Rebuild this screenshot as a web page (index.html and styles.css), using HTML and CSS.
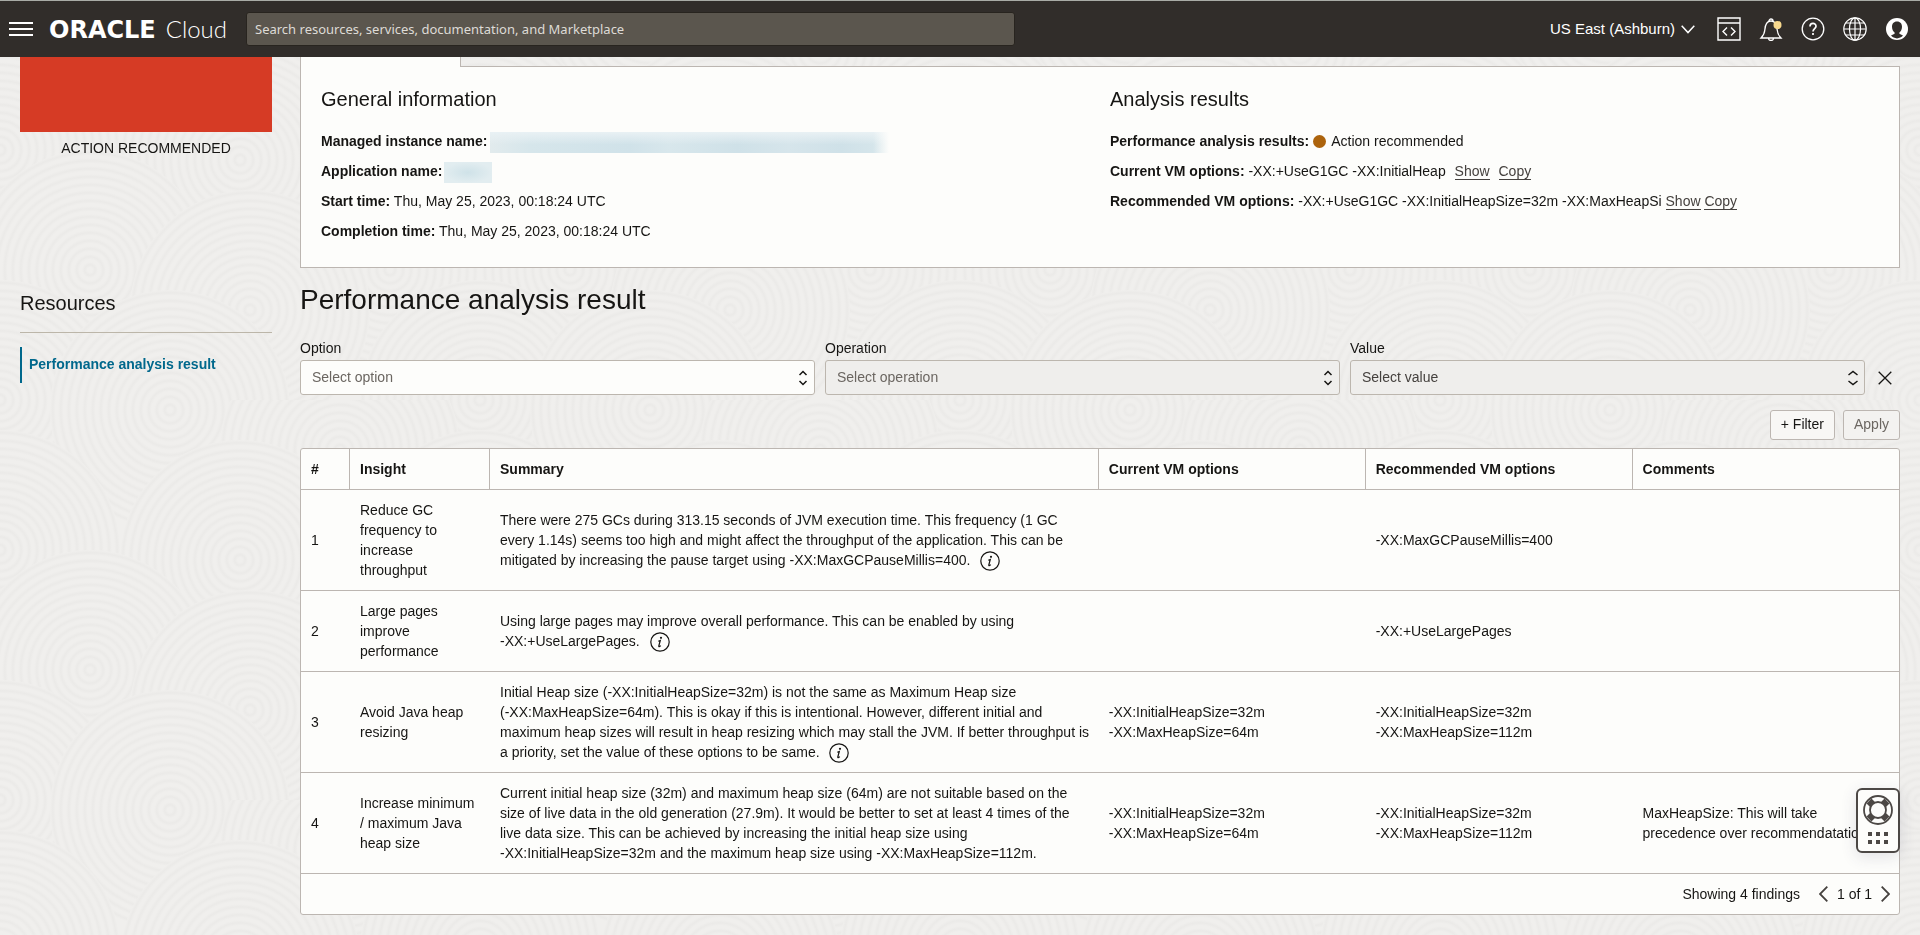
FILE: index.html
```html
<!DOCTYPE html>
<html lang="en">
<head>
<meta charset="utf-8">
<title>Performance analysis result - Oracle Cloud</title>
<link rel="stylesheet" href="styles.css">
</head>
<body>
<svg class="texture" aria-hidden="true">
  <defs>
    <radialGradient id="ring" gradientUnits="userSpaceOnUse" cx="0" cy="0" r="8" spreadMethod="repeat">
      <stop offset="0" stop-color="#f0efed"/><stop offset="0.3" stop-color="#f0efed"/>
      <stop offset="0.65" stop-color="#ebeae8"/><stop offset="1" stop-color="#f0efed"/>
    </radialGradient>
    <circle id="disc" r="120" fill="url(#ring)"/>
    <pattern id="waves" width="480" height="400" patternUnits="userSpaceOnUse">
      <rect width="480" height="400" fill="#f0efed"/>
      <use href="#disc" x="0" y="0"/><use href="#disc" x="480" y="0"/>
      <use href="#disc" x="170" y="10"/>
      <use href="#disc" x="340" y="50"/>
      <use href="#disc" x="0" y="150"/><use href="#disc" x="480" y="150"/>
      <use href="#disc" x="240" y="160"/>
      <use href="#disc" x="90" y="270"/>
      <use href="#disc" x="390" y="270"/>
      <use href="#disc" x="250" y="310"/>
      <use href="#disc" x="0" y="400"/><use href="#disc" x="480" y="400"/>
      <use href="#disc" x="170" y="410"/>
    </pattern>
  </defs>
  <rect width="100%" height="100%" fill="url(#waves)"/>
</svg>

<header class="topbar">
  <button class="icon-btn" aria-label="Navigation menu">
    <svg width="24" height="14" viewBox="0 0 24 14" stroke="#fff" stroke-width="2"><path d="M0 1h24M0 7h24M0 13h24"/></svg>
  </button>
  <a class="brand" href="#"><span class="brand-oracle">ORACLE</span><span class="brand-cloud">Cloud</span></a>
  <input class="search" type="search" aria-label="Search" placeholder="Search resources, services, documentation, and Marketplace">
  <div class="tools">
    <button class="region">US East (Ashburn)
      <svg width="14" height="9" viewBox="0 0 14 9" fill="none" stroke="#fff" stroke-width="1.5"><path d="M.7.8 7 7.6 13.3.8"/></svg>
    </button>
    <button class="icon-btn" aria-label="Developer tools">
      <svg width="24" height="24" viewBox="0 0 24 24" fill="none" stroke="#fff" stroke-width="1.4"><path d="M1 1h22v22H1zM1 6h22M10 10.500l-4 4 4 4M14 10.500l4 4-4 4"/></svg>
    </button>
    <button class="icon-btn" aria-label="Announcements">
      <svg width="24" height="24" viewBox="0 0 24 24" fill="none" stroke="#fff" stroke-width="1.3"><path d="M2 21h20c-2.500-2.500-3.500-4-3.800-8C17.800 7.500 15.500 4 12 4S6.200 7.500 5.800 13C5.500 17 4.500 18.500 2 21zM10 4a2 2 0 1 1 4 0M9.500 21a2.500 2.500 0 0 0 5 0"/><circle cx="18.500" cy="8" r="4" fill="#f7d88d" stroke="none"/></svg>
    </button>
    <button class="icon-btn" aria-label="Help">
      <svg width="24" height="24" viewBox="0 0 24 24" fill="none" stroke="#fff" stroke-width="1.3"><circle cx="12" cy="12" r="10.800"/><path d="M9 9.500c0-4 6-4 6-.3 0 2.300-3 2.600-3 5.300M12 16v2" stroke-width="1.700"/></svg>
    </button>
    <button class="icon-btn" aria-label="Language">
      <svg width="24" height="24" viewBox="0 0 24 24" fill="none" stroke="#fff" stroke-width="1.200"><circle cx="12" cy="12" r="11.200"/><ellipse cx="12" cy="12" rx="5.500" ry="11.200"/><path d="M12 1v22M1 12h22M3 6h18M3 18h18"/></svg>
    </button>
    <button class="icon-btn" aria-label="Profile">
      <svg width="24" height="24" viewBox="0 0 24 24"><circle cx="12" cy="12" r="11" fill="#fff"/><path d="M12 4.500c-3.400 0-5 2.300-5 5.200 0 2.600 1.100 4.700 2.600 5.700v1.400L6 18.600c1.600 1.800 3.700 2.800 6 2.800s4.400-1 6-2.800l-3.600-1.800v-1.400c1.500-1 2.600-3.100 2.600-5.700 0-2.900-1.600-5.200-5-5.200z" fill="#312d2a"/></svg>
    </button>
  </div>
</header>

<div class="page">
  <aside class="sidebar">
    <div class="status-tile"></div>
    <p class="status-label">ACTION RECOMMENDED</p>
    <h2 class="side-title">Resources</h2>
    <nav><a class="side-link" href="#result">Performance analysis result</a></nav>
  </aside>

  <main class="main">
    <div class="tabs"><div class="tab-active"></div><div class="tab-rest"></div></div>
    <section class="panel">
      <div>
        <h2 class="panel-title">General information</h2>
        <p class="fact"><b>Managed instance name:</b><span class="masked masked-long"></span></p>
        <p class="fact"><b>Application name:</b><span class="masked masked-short"></span></p>
        <p class="fact"><b>Start time:</b> Thu, May 25, 2023, 00:18:24 UTC</p>
        <p class="fact"><b>Completion time:</b> Thu, May 25, 2023, 00:18:24 UTC</p>
      </div>
      <div>
        <h2 class="panel-title">Analysis results</h2>
        <p class="fact"><b>Performance analysis results:</b> <span class="dot"></span> Action recommended</p>
        <p class="fact"><b>Current VM options:</b> -XX:+UseG1GC -XX:InitialHeap <a class="action spaced" href="#">Show</a> <a class="action spaced" href="#">Copy</a></p>
        <p class="fact"><b>Recommended VM options:</b> -XX:+UseG1GC -XX:InitialHeapSize=32m -XX:MaxHeapSi <a class="action" href="#">Show</a> <a class="action" href="#">Copy</a></p>
      </div>
    </section>

    <h1 class="title" id="result">Performance analysis result</h1>

    <form class="filters">
      <div class="field">
        <label for="option">Option</label>
        <div class="select-box">
          <select id="option"><option>Select option</option></select>
          <svg class="carets" width="10" height="16" viewBox="0 0 10 16"><path d="M1.500 5 5 1.500 8.500 5M1.500 11 5 14.500 8.500 11"/></svg>
        </div>
      </div>
      <div class="field">
        <label for="operation">Operation</label>
        <div class="select-box">
          <select id="operation" disabled><option>Select operation</option></select>
          <svg class="carets" width="10" height="16" viewBox="0 0 10 16"><path d="M1.500 5 5 1.500 8.500 5M1.500 11 5 14.500 8.500 11"/></svg>
        </div>
      </div>
      <div class="field">
        <label for="value">Value</label>
        <div class="select-box">
          <select id="value" class="value-select" disabled><option>Select value</option></select>
          <svg class="carets" width="10" height="16" viewBox="0 0 10 16"><path d="M.5 5 5 1.500 9.500 5M.5 11 5 14.500 9.500 11"/></svg>
        </div>
      </div>
      <button class="clear" type="button" aria-label="Remove filter">
        <svg width="14" height="14" viewBox="0 0 14 14" stroke="#161513" stroke-width="1.300"><path d="M.7.7l12.600 12.600M13.300.7.7 13.300"/></svg>
      </button>
    </form>
    <div class="filter-actions">
      <button class="btn" type="button">+ Filter</button>
      <button class="btn" type="button" disabled>Apply</button>
    </div>

    <div class="table-card">
      <table class="findings">
        <colgroup><col class="c-num"><col class="c-insight"><col class="c-summary"><col class="c-vm"><col class="c-vm"><col></colgroup>
        <thead>
          <tr><th>#</th><th>Insight</th><th>Summary</th><th>Current VM options</th><th>Recommended VM options</th><th>Comments</th></tr>
        </thead>
        <tbody>
          <tr>
            <td>1</td><td>Reduce GC frequency to increase throughput</td>
            <td class="summary">There were 275 GCs during 313.15 seconds of JVM execution time. This frequency (1 GC every 1.14s) seems too high and might affect the throughput of the application. This can be mitigated by increasing the pause target using -XX:MaxGCPauseMillis=400. <button class="info" aria-label="More information"><svg width="20" height="20" viewBox="0 0 20 20"><use href="#info-icon"/></svg></button></td>
            <td></td><td>-XX:MaxGCPauseMillis=400</td><td></td>
          </tr>
          <tr>
            <td>2</td><td>Large pages improve performance</td>
            <td class="summary">Using large pages may improve overall performance. This can be enabled by using <span class="opt">-XX:+UseLargePages.</span> <button class="info" aria-label="More information"><svg width="20" height="20" viewBox="0 0 20 20"><use href="#info-icon"/></svg></button></td>
            <td></td><td>-XX:+UseLargePages</td><td></td>
          </tr>
          <tr>
            <td>3</td><td>Avoid Java heap resizing</td>
            <td class="summary">Initial Heap size (-XX:InitialHeapSize=32m) is not the same as Maximum Heap size <span class="opt">(-XX:MaxHeapSize=64m).</span> This is okay if this is intentional. However, different initial and maximum heap sizes will result in heap resizing which may stall the JVM. If better throughput is a priority, set the value of these options to be same. <button class="info" aria-label="More information"><svg width="20" height="20" viewBox="0 0 20 20"><use href="#info-icon"/></svg></button></td>
            <td>-XX:InitialHeapSize=32m<br>-XX:MaxHeapSize=64m</td><td>-XX:InitialHeapSize=32m<br>-XX:MaxHeapSize=112m</td><td></td>
          </tr>
          <tr>
            <td>4</td><td>Increase minimum / maximum Java heap size</td>
            <td class="summary">Current initial heap size (32m) and maximum heap size (64m) are not suitable based on the size of live data in the old generation (27.9m). It would be better to set at least 4 times of the live data size. This can be achieved by increasing the initial heap size using <span class="opt">-XX:InitialHeapSize=32m</span> and the maximum heap size using -XX:MaxHeapSize=112m.</td>
            <td>-XX:InitialHeapSize=32m<br>-XX:MaxHeapSize=64m</td><td>-XX:InitialHeapSize=32m<br>-XX:MaxHeapSize=112m</td><td>MaxHeapSize: This will take precedence over recommendatation</td>
          </tr>
        </tbody>
      </table>
      <div class="pager">
        <span class="count">Showing 4 findings</span>
        <button class="page-btn" aria-label="Previous page"><svg width="9" height="16" viewBox="0 0 9 16"><path d="M8.300.7 1 8l7.300 7.300"/></svg></button>
        <span>1 of 1</span>
        <button class="page-btn" aria-label="Next page"><svg width="9" height="16" viewBox="0 0 9 16"><path d="M.7.7 8 8 .7 15.300"/></svg></button>
      </div>
    </div>
  </main>
</div>

<button class="help-widget" aria-label="Support">
  <svg width="30" height="30" viewBox="0 0 30 30" fill="none" stroke="#4c4845">
    <path d="M6 6l5 5M24 6l-5 5M6 24l5-5M24 24l-5-5" stroke-width="7"/>
    <circle cx="15" cy="15" r="14" stroke-width="1.800"/><circle cx="15" cy="15" r="8" stroke-width="1.800" fill="#fdfdfb"/>
  </svg>
  <svg width="20" height="12" viewBox="0 0 20 12" fill="#4c4845"><path d="M0 0h4v4H0zM8 0h4v4H8zM16 0h4v4h-4zM0 8h4v4H0zM8 8h4v4H8zM16 8h4v4h-4z"/></svg>
</button>

<svg class="defs" width="0" height="0" aria-hidden="true">
  <symbol id="info-icon" viewBox="0 0 20 20"><circle cx="10" cy="10" r="9.200" fill="none" stroke="#161513" stroke-width="1.200"/><circle cx="11" cy="5.800" r="1.100" fill="#161513"/><path d="M8.300 9.300l2-.8-1.500 5.500c-.2 1 .9.800 2-.4" fill="none" stroke="#161513" stroke-width="1.200"/></symbol>
</svg>
</body>
</html>
```
FILE: styles.css
```css
* { box-sizing: border-box; }

body {
  margin: 0;
  min-height: 100vh;
  display: flex;
  flex-direction: column;
  background: #f0efed;
  border-top: 1px solid #a9aca6;
  border-bottom: 1px solid #bcb6b1;
  color: #161513;
  font: 14px/20px "Liberation Sans", Arial, sans-serif;
}

h1, h2, p { margin: 0; font-weight: 400; }
button, select, input { font: inherit; color: inherit; }
button { background: none; border: 0; padding: 0; cursor: pointer; }
svg { display: block; }

.texture { position: fixed; inset: 0; width: 100%; height: 100%; z-index: -1; }
.defs { position: absolute; }

/* Top bar */
.topbar {
  display: flex;
  align-items: center;
  height: 56px;
  padding: 0 11px 0 9px;
  background: #312d2a;
  color: #fff;
}
.brand { display: flex; align-items: baseline; justify-content: space-between; width: 178px; margin: 0 19px 0 16px; color: #fff; text-decoration: none; line-height: 28px; }
.brand-oracle { font-family: "DejaVu Sans", sans-serif; font-size: 24px; font-weight: 700; }
.brand-cloud { font-family: Lato, sans-serif; font-size: 24px; font-weight: 300; }
.search {
  flex: 0 1 769px;
  height: 34px;
  padding: 0 8px;
  border: 1px solid #28241f;
  border-radius: 3px;
  background: #5b564e;
  font: 13px/20px "Noto Sans", sans-serif;
  color: #fff;
}
.search::placeholder { color: #dedbd6; opacity: 1; }
.tools { display: flex; align-items: center; gap: 18px; margin-left: auto; }
.region { display: flex; align-items: center; gap: 6px; margin-right: 4px; font-size: 15px; }
.icon-btn { flex: none; }

/* Page frame */
.page { display: flex; flex: 1; gap: 28px; padding: 0 20px 20px; }
.sidebar { flex: 0 0 252px; }
.main { flex: 1; min-width: 0; }

.status-tile { height: 75px; background: #d63b25; }
.status-label { padding: 6px 0; text-align: center; }
.side-title { padding: 125px 0 15px; margin-bottom: 14px; border-bottom: 1px solid #bcb6a9; font-size: 20px; line-height: 28px; }
.side-link { display: block; padding: 7px 7px 9px; border-left: 2px solid #00688c; color: #00688c; font-weight: 700; text-decoration: none; }

/* Details panel */
.tabs { display: flex; height: 10px; }
.tab-active { flex: 0 0 161px; background: #fdfdfb; border: solid #bcb6b1; border-width: 0 1px; }
.tab-rest { flex: 1; border-bottom: 1px solid #bcb6b1; }
.panel {
  display: grid;
  grid-template-columns: 1fr 1fr;
  gap: 20px;
  padding: 18px 20px 21px;
  background: #fdfdfb;
  border: 1px solid #bcb6b1;
  border-top: 0;
}
.panel-title { margin-bottom: 13px; font-size: 20px; line-height: 28px; }
.fact { line-height: 30px; white-space: nowrap; }
.masked { display: inline-block; height: 21px; margin-left: 2px; vertical-align: middle; }
.masked-long {
  width: 399px;
  background:
    linear-gradient(90deg, transparent 96%, #fdfdfb),
    linear-gradient(#e9f1f4, transparent 60%),
    linear-gradient(90deg, #e2ebed, #d6e6eb 10%, #d0e2e9 35%, #d8e7ec 45%, #cfe1e8 62%, #d6e5eb 75%, #cfe1e8 88%, #d8e7ec);
}
.masked-short { width: 48px; background: radial-gradient(closest-side, #cfe2e8, #e2edf0); }
.dot { display: inline-block; width: 13px; height: 13px; margin-right: 2px; border-radius: 50%; background: #ac630c; vertical-align: -2px; }
.action { color: #45413e; text-decoration: none; border-bottom: 1px solid #45413e; }
.spaced { margin-left: 5px; }

/* Filters */
.title { padding: 15px 0 16px; font-size: 28px; line-height: 34px; }
.filters { display: flex; align-items: flex-end; gap: 10px; padding-top: 5px; }
.field { flex: 1; }
.field label { display: block; margin-bottom: 2px; }
.select-box { position: relative; }
.select-box select {
  display: block;
  width: 100%;
  height: 35px;
  padding: 0 11px 2px;
  appearance: none;
  border: 1px solid #bcb6ae;
  border-radius: 3px;
  background: #fdfdfb;
  color: #6b6661;
  opacity: 1;
}
.select-box select:disabled { background: #efeeec; }
.select-box .value-select { color: #45413e; }
.carets { position: absolute; right: 7px; top: 10px; fill: none; stroke: #161513; stroke-width: 1.5; pointer-events: none; }
.clear { display: grid; place-items: center; width: 25px; height: 35px; padding-right: 5px; }
.filter-actions { display: flex; justify-content: flex-end; gap: 8px; margin: 15px 0 8px; }
.btn { height: 30px; padding: 0 10px 2px; border: 1px solid #bcb6b1; border-radius: 3px; background: #f8f7f5; }
.btn:disabled { background: #f3f2f0; color: #6b6661; }

/* Findings */
.table-card { background: #fdfdfb; border: 1px solid #bcb6b1; border-radius: 3px; }
.findings { width: 100%; table-layout: fixed; border-collapse: separate; border-spacing: 0; }
.c-num { width: 49px; }
.c-insight { width: 140px; }
.c-summary { width: 38.1%; }
.c-vm { width: 16.7%; }
.findings th, .findings td { padding: 10px 9px 10px 10px; border-bottom: 1px solid #bcb6b1; text-align: left; vertical-align: middle; }
.findings th { border-right: 1px solid #bcb6b1; }
.findings th:last-child { border-right: 0; }
.findings .summary { padding-right: 7px; }
.opt { white-space: nowrap; }
.info { display: inline-block; height: 20px; margin: -4px 0 -4px 6px; vertical-align: middle; }
.pager { display: flex; justify-content: flex-end; align-items: center; gap: 9px; height: 40px; padding-right: 9px; }
.count { margin-right: 10px; }
.page-btn svg { fill: none; stroke: #45413e; stroke-width: 1.8; }

/* Floating support button */
.help-widget {
  position: fixed;
  right: 20px;
  bottom: 82px;
  display: flex;
  flex-direction: column;
  align-items: center;
  gap: 7px;
  padding: 5px 5px 7px;
  border: 2px solid #4c4845;
  border-radius: 6px;
  background: #fdfdfb;
  box-shadow: 0 4px 16px rgba(60, 60, 90, .14);
}
```
